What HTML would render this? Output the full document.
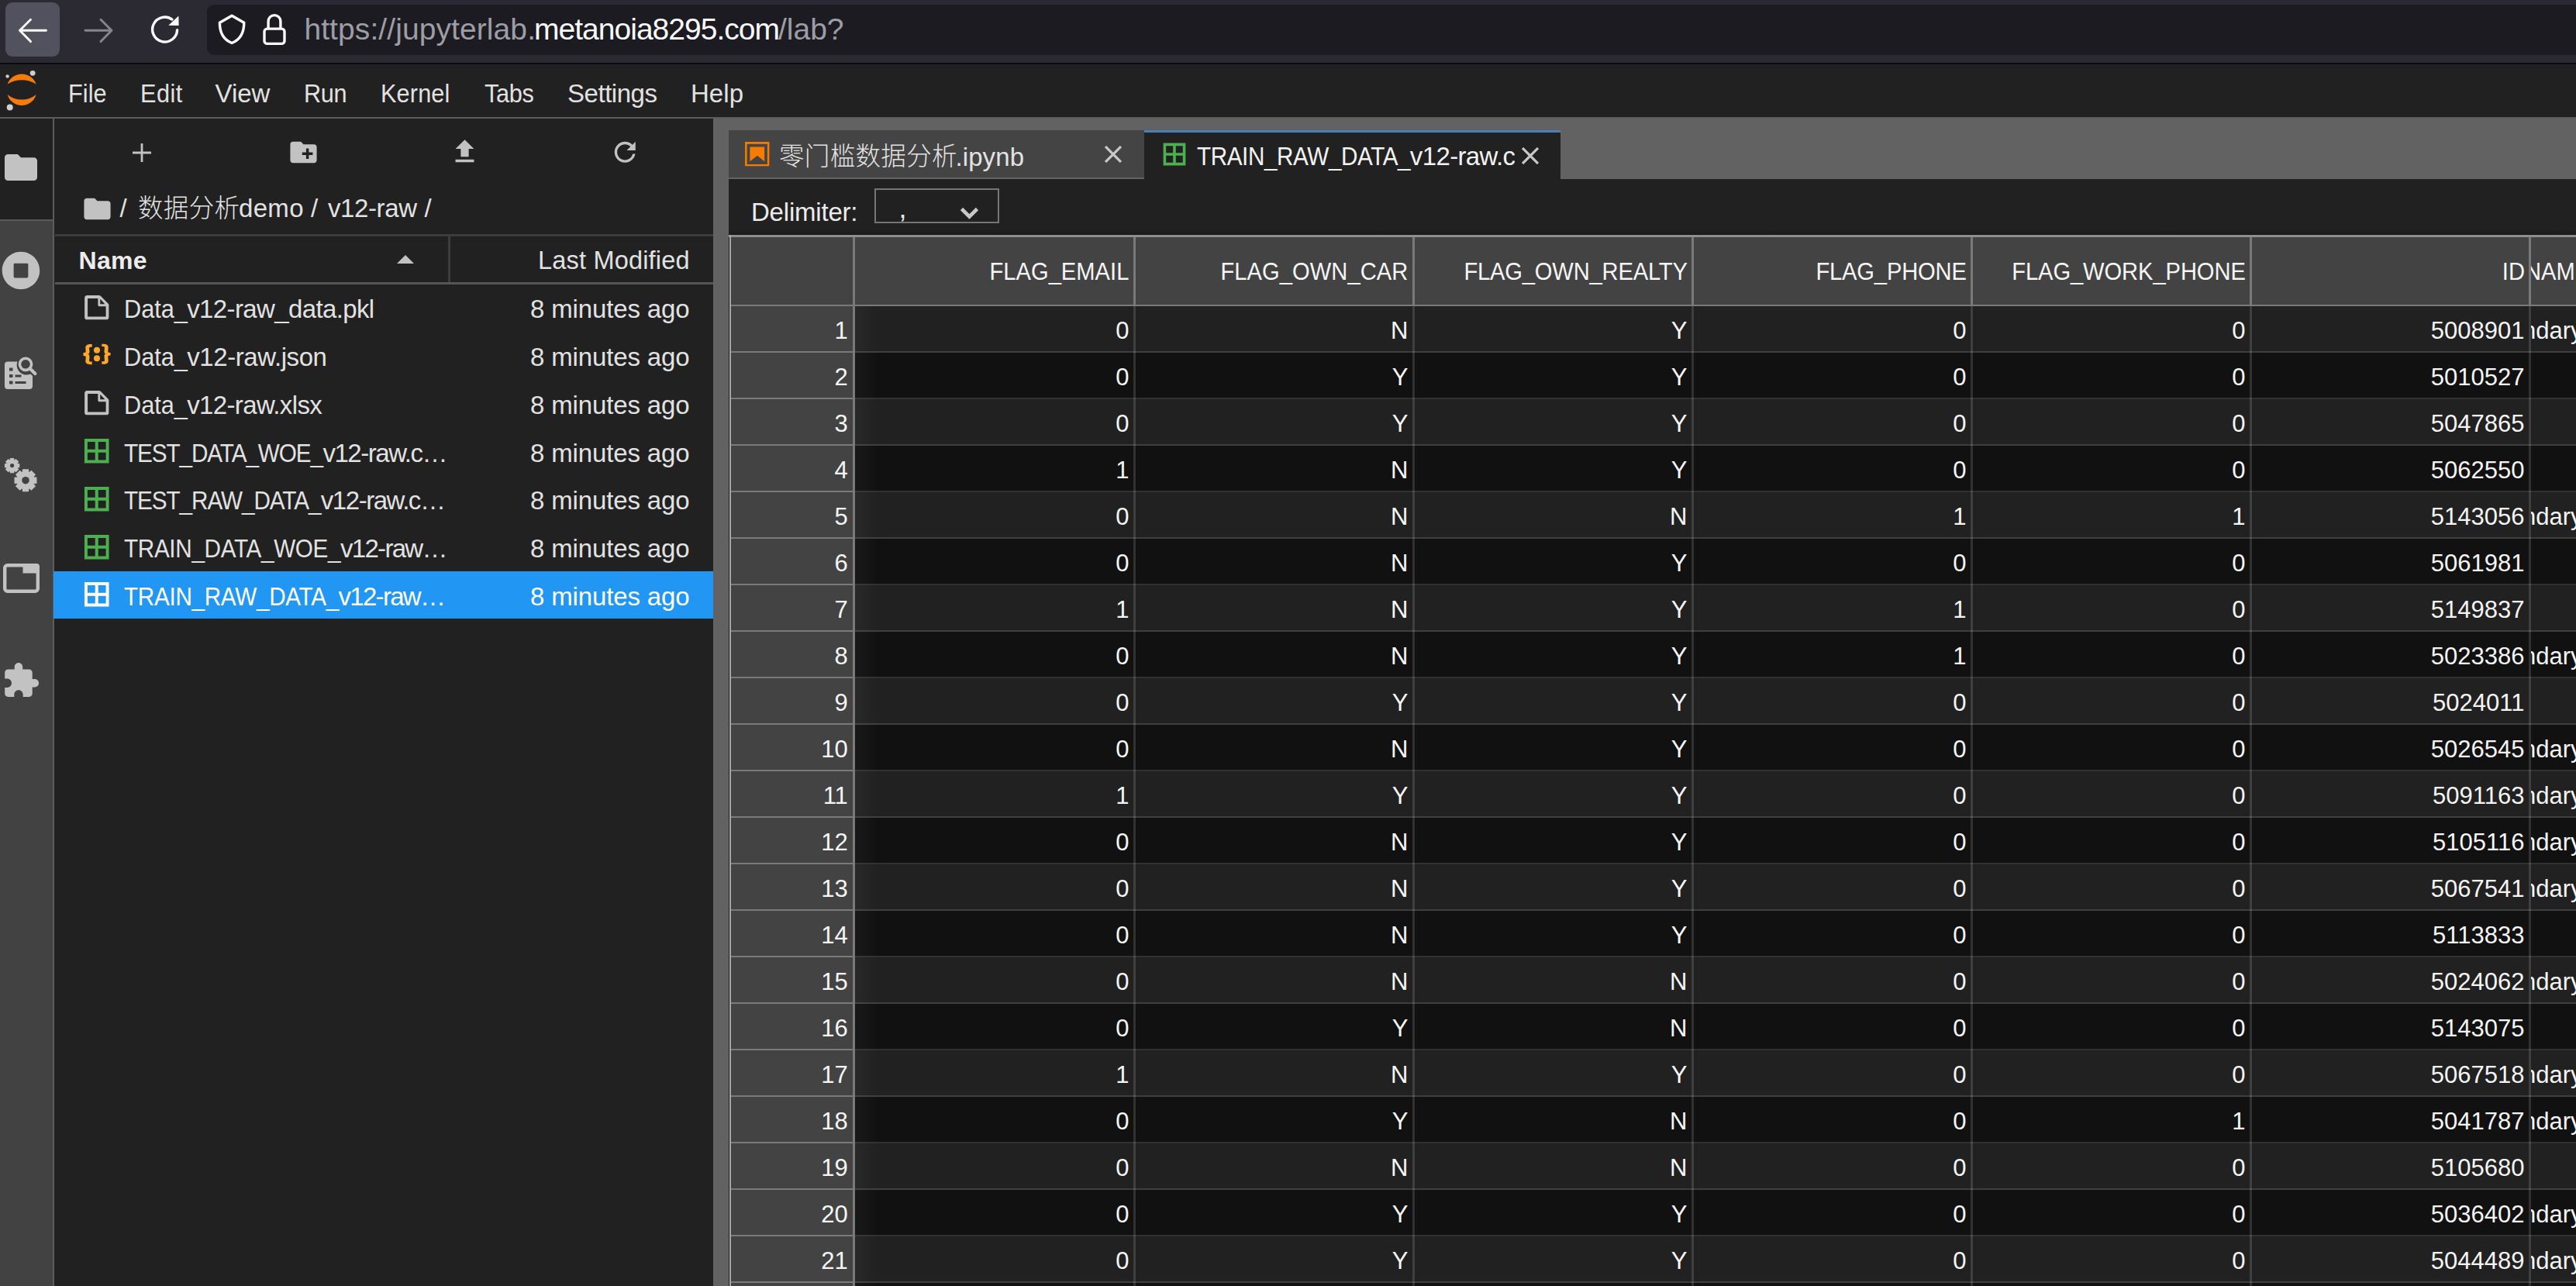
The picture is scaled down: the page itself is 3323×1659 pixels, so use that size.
<!DOCTYPE html>
<html lang="zh-CN">
<head>
<meta charset="utf-8">
<title>JupyterLab</title>
<style>
html,body{margin:0;padding:0;background:#212121;}
body{width:3323px;height:1659px;overflow:hidden;position:relative;font-family:"Liberation Sans", "Noto Sans CJK SC", sans-serif;}
header,nav,aside,section,main,ul,li{display:block;margin:0;padding:0;list-style:none;}
.b{position:absolute;display:block;}
.t{position:absolute;white-space:pre;display:block;}
</style>
</head>
<body>
<header class="chrome">
<div class="b" style="left:0px;top:0px;width:3323px;height:81px;background:#2b2a33;"></div>
<div class="b" style="left:0px;top:81px;width:3323px;height:2px;background:#0b0b0d;"></div>
<div class="b" style="left:7px;top:3px;width:70px;height:70px;background:#52525e;border-radius:9px;"></div>
<svg class="b" style="left:0px;top:0px;" width="260" height="81" viewBox="0 0 260 81"><g fill="none" stroke-linecap="round" stroke-linejoin="round" stroke-width="2.900"><path stroke="#fbfbfe" d="M59.500 39.300H25.500M39.500 25.300L25.500 39.300L39.500 53.600"/><path stroke="#85858e" d="M110 39.300H144M130 25.300L144 39.300L130 53.600"/></g><path fill="none" stroke="#fbfbfe" stroke-width="3.400" stroke-linecap="round" d="M228.600 38.600A16 16 0 1 1 222 25.100"/><path fill="#fbfbfe" d="M217.300 32.700L230.600 32.900L230.400 20.400Z"/></svg>
<div class="b" style="left:267px;top:6px;width:3076px;height:64.5px;background:#1c1b22;border-radius:9px;"></div>
<svg class="b" style="left:276px;top:14px;" width="46" height="48" viewBox="0 0 46 48"><path fill="none" stroke="#fbfbfe" stroke-width="3.400" stroke-linejoin="round" d="M23.100 6.300L7.400 15.300C7.400 28 12.300 37.300 23.100 41.500C33.900 37.300 38.800 28 38.800 15.300Z"/></svg>
<svg class="b" style="left:334px;top:14px;" width="40" height="48" viewBox="0 0 40 48"><g fill="none" stroke="#fbfbfe" stroke-width="3.400" stroke-linejoin="round"><rect x="7" y="23.100" width="26" height="19.300" rx="3.600"/><path d="M12.100 23.100V13.500A7.900 7.900 0 0 1 27.900 13.500V23.100"/></g></svg>
<span class="t" style="top:11.99px;font-size:39px;line-height:51px;color:#9d9da6;letter-spacing:0.089px;left:392.40px;">https://jupyterlab.</span>
<span class="t" style="top:11.99px;font-size:39px;line-height:51px;color:#fbfbfe;letter-spacing:-0.981px;left:689.00px;">metanoia8295.com</span>
<span class="t" style="top:11.99px;font-size:39px;line-height:51px;color:#9d9da6;letter-spacing:-0.020px;left:1004.00px;">/lab?</span>
</header>
<nav class="menubar">
<div class="b" style="left:0px;top:83px;width:3323px;height:70px;background:#212121;"></div>
<div class="b" style="left:0px;top:150.5px;width:3323px;height:2.5px;background:#5c5c5c;"></div>
<svg class="b" style="left:4px;top:89px;" width="48" height="56" viewBox="0 0 48 56"><g fill="#f57c0a"><path d="M5.600 19.500A19.650 19.650 0 0 1 42.600 19.500A35.500 35.500 0 0 0 5.600 19.500Z"/><path d="M5.600 32.900A19.200 19.200 0 0 0 42.600 32.900A29.200 29.200 0 0 1 5.600 32.900Z"/></g><g fill="#cfcfcf"><circle cx="38.200" cy="5.300" r="3.400"/><circle cx="5.600" cy="9.400" r="2.200"/><circle cx="8.700" cy="49.500" r="4"/></g></svg>
<span class="t" style="top:99.07px;font-size:33px;line-height:43px;color:#e2e2e2;letter-spacing:0.070px;left:87.50px;transform:scaleX(0.93);transform-origin:0 50%;">File</span>
<span class="t" style="top:99.07px;font-size:33px;line-height:43px;color:#e2e2e2;letter-spacing:0.526px;left:180.80px;transform:scaleX(0.93);transform-origin:0 50%;">Edit</span>
<span class="t" style="top:99.07px;font-size:33px;line-height:43px;color:#e2e2e2;letter-spacing:-0.046px;left:277.60px;">View</span>
<span class="t" style="top:99.07px;font-size:33px;line-height:43px;color:#e2e2e2;letter-spacing:-0.456px;left:391.90px;transform:scaleX(0.93);transform-origin:0 50%;">Run</span>
<span class="t" style="top:99.07px;font-size:33px;line-height:43px;color:#e2e2e2;letter-spacing:0.139px;left:491.00px;transform:scaleX(0.93);transform-origin:0 50%;">Kernel</span>
<span class="t" style="top:99.07px;font-size:33px;line-height:43px;color:#e2e2e2;letter-spacing:-0.351px;left:625.00px;transform:scaleX(0.93);transform-origin:0 50%;">Tabs</span>
<span class="t" style="top:99.07px;font-size:33px;line-height:43px;color:#e2e2e2;letter-spacing:-0.464px;left:732.00px;">Settings</span>
<span class="t" style="top:99.07px;font-size:33px;line-height:43px;color:#e2e2e2;letter-spacing:0.042px;left:891.00px;">Help</span>
</nav>
<aside class="sidebar">
<div class="b" style="left:0px;top:153px;width:68px;height:1506px;background:#424242;"></div>
<div class="b" style="left:0px;top:153px;width:68px;height:130px;background:#212121;"></div>
<div class="b" style="left:0px;top:283px;width:68px;height:2px;background:#5a5a5a;"></div>
<div class="b" style="left:68.3px;top:153px;width:2.2px;height:1506px;background:#5c5c5c;"></div>
<svg class="b" style="left:3px;top:192px;transform:scale(1.050,1.060);" width="48" height="48" viewBox="0 0 24 24"><path fill="#c2c2c2" d="M10 4H4c-1.100 0-1.990.9-1.990 2L2 18c0 1.100.9 2 2 2h16c1.100 0 2-.9 2-2V8c0-1.100-.9-2-2-2h-8l-2-2z"/></svg>
<svg class="b" style="left:1.9px;top:324.4px;" width="50" height="50" viewBox="0 0 512 512"><path fill="#c2c2c2" d="M256 8C119 8 8 119 8 256s111 248 248 248 248-111 248-248S393 8 256 8zm96 328c0 8.800-7.200 16-16 16H176c-8.800 0-16-7.200-16-16V176c0-8.800 7.200-16 16-16h160c8.800 0 16 7.200 16 16v160z"/></svg>
<svg class="b" style="left:4px;top:458px;" width="46" height="46" viewBox="0 0 46 46"><g fill="#c2c2c2"><path d="M6 8.500h12.500a13 13 0 0 0 -.8 4.500a12.600 12.600 0 0 0 12.600 12.600a12.400 12.400 0 0 0 5.200-1.100l2.500 2.500V40a4 4 0 0 1-4 4H6a4 4 0 0 1-4-4V12.500a4 4 0 0 1 4-4z"/></g><g fill="#424242"><rect x="8" y="16.500" width="4.500" height="4"/><rect x="8" y="25" width="4.500" height="4"/><rect x="8" y="33.500" width="4.500" height="4"/><rect x="15.500" y="25.500" width="8" height="3"/><rect x="15.500" y="34" width="14" height="3"/></g><circle cx="29" cy="11.800" r="7.600" fill="none" stroke="#c2c2c2" stroke-width="3.600"/><path d="M34.500 17.300L41.300 24" stroke="#c2c2c2" stroke-width="4.200" stroke-linecap="round"/></svg>
<svg class="b" style="left:0px;top:585px;" width="60" height="56" viewBox="0 0 60 56"><path fill="#c2c2c2" d="M22.30 12.70L25.25 12.96L25.25 18.24L22.30 18.50L22.39 18.29L24.29 20.55L20.55 24.29L18.29 22.39L18.50 22.30L18.24 25.25L12.96 25.25L12.70 22.30L12.91 22.39L10.65 24.29L6.91 20.55L8.81 18.29L8.90 18.50L5.95 18.24L5.95 12.96L8.90 12.70L8.81 12.91L6.91 10.65L10.65 6.91L12.91 8.81L12.70 8.90L12.96 5.95L18.24 5.95L18.50 8.90L18.29 8.81L20.55 6.91L24.29 10.65L22.39 12.91Z"/><circle cx="15.6" cy="15.6" r="2.6" fill="#424242"/><path fill="#c2c2c2" d="M43.10 30.33L47.47 30.74L47.47 38.66L43.10 39.07L43.23 38.75L46.03 42.13L40.43 47.73L37.05 44.93L37.37 44.80L36.96 49.17L29.04 49.17L28.63 44.80L28.95 44.93L25.57 47.73L19.97 42.13L22.77 38.75L22.90 39.07L18.53 38.66L18.53 30.74L22.90 30.33L22.77 30.65L19.97 27.27L25.57 21.67L28.95 24.47L28.63 24.60L29.04 20.23L36.96 20.23L37.37 24.60L37.05 24.47L40.43 21.67L46.03 27.27L43.23 30.65Z"/><circle cx="33" cy="34.7" r="4.8" fill="#424242"/></svg>
<svg class="b" style="left:3.5px;top:726.5px;" width="47" height="38" viewBox="0 0 47 38"><rect x="2.200" y="2.200" width="42.600" height="33.600" rx="3.500" fill="none" stroke="#c2c2c2" stroke-width="4.400"/><path fill="#c2c2c2" d="M25.500 0H43a4 4 0 0 1 4 4V12.500H25.500Z"/></svg>
<svg class="b" style="left:1.65px;top:852.5px;" width="50.2" height="50.2" viewBox="0 0 24 24"><path fill="#c2c2c2" d="M20.500 11H19V7c0-1.100-.9-2-2-2h-4V3.500C13 2.120 11.880 1 10.500 1S8 2.120 8 3.500V5H4c-1.100 0-1.990.9-1.990 2v3.800H3.500c1.490 0 2.700 1.210 2.700 2.700s-1.210 2.700-2.700 2.700H2V20c0 1.100.9 2 2 2h3.800v-1.500c0-1.490 1.210-2.700 2.700-2.700 1.490 0 2.700 1.210 2.700 2.700V22H17c1.100 0 2-.9 2-2v-4h1.500c1.380 0 2.500-1.120 2.500-2.500S21.880 11 20.500 11z"/></svg>
</aside>
<section class="filebrowser">
<div class="b" style="left:70.5px;top:153px;width:849.5px;height:1506px;background:#212121;"></div>
<svg class="b" style="left:171px;top:184.5px;" width="24" height="24" viewBox="0 0 24 24"><path fill="#c2c2c2" d="M10.600 0h2.800v10.600H24v2.800H13.400V24h-2.800V13.400H0v-2.800h10.600z"/></svg>
<svg class="b" style="left:370.5px;top:175.5px;" width="41" height="41" viewBox="0 0 24 24"><path fill="#c2c2c2" d="M20 6h-8l-2-2H4c-1.110 0-1.990.89-1.990 2L2 18c0 1.110.89 2 2 2h16c1.110 0 2-.89 2-2V8c0-1.110-.89-2-2-2zm-1 8h-3v3h-2v-3h-3v-2h3V9h2v3h3v2z"/></svg>
<svg class="b" style="left:578.5px;top:174.5px;" width="41" height="41" viewBox="0 0 24 24"><path fill="#c2c2c2" d="M9 16h6v-6h4l-7-7-7 7h4zm-4 2h14v2H5z"/></svg>
<svg class="b" style="left:785.9px;top:175.9px;" width="40.5" height="40.5" viewBox="0 0 18 18"><path fill="#c2c2c2" d="M9 13.500c-2.490 0-4.500-2.010-4.500-4.500S6.510 4.500 9 4.500c1.240 0 2.360.52 3.170 1.330L10 8h5V3l-1.760 1.760C12.150 3.680 10.660 3 9 3 5.690 3 3.010 5.690 3.010 9S5.690 15 9 15c2.970 0 5.430-2.160 5.900-5h-1.520c-.46 2-2.240 3.500-4.380 3.500z"/></svg>
<svg class="b" style="left:104.5px;top:248.5px;" width="41" height="41" viewBox="0 0 24 24"><path fill="#c2c2c2" d="M10 4H4c-1.100 0-1.990.9-1.990 2L2 18c0 1.100.9 2 2 2h16c1.100 0 2-.9 2-2V8c0-1.100-.9-2-2-2h-8l-2-2z"/></svg>
<span class="t" style="top:247.07px;font-size:33px;line-height:43px;color:#e2e2e2;left:154.50px;">/</span>
<span class="t" style="top:247.74px;font-size:32.5px;line-height:42px;color:#e2e2e2;font-weight:300;letter-spacing:0.328px;left:178.00px;">数据分析</span>
<span class="t" style="top:247.07px;font-size:33px;line-height:43px;color:#e2e2e2;letter-spacing:0.312px;left:308.00px;">demo</span>
<span class="t" style="top:247.07px;font-size:33px;line-height:43px;color:#e2e2e2;left:401.00px;">/</span>
<span class="t" style="top:247.07px;font-size:33px;line-height:43px;color:#e2e2e2;letter-spacing:-0.396px;left:423.00px;">v12-raw</span>
<span class="t" style="top:247.07px;font-size:33px;line-height:43px;color:#e2e2e2;left:547.50px;">/</span>
<div class="b" style="left:70.5px;top:302px;width:849.5px;height:2.5px;background:#3c3c3c;"></div>
<div class="b" style="left:70.5px;top:364px;width:849.5px;height:2.5px;background:#555555;"></div>
<div class="b" style="left:578px;top:304.5px;width:2.5px;height:59.5px;background:#3c3c3c;"></div>
<span class="t" style="top:315.41px;font-size:32px;line-height:42px;color:#ececec;font-weight:700;letter-spacing:0.281px;left:101.50px;">Name</span>
<svg class="b" style="left:512px;top:328.5px;" width="22" height="11" viewBox="0 0 22 11"><path fill="#c2c2c2" d="M0 11L11 0L22 11Z"/></svg>
<span class="t" style="top:315.24px;font-size:32.5px;line-height:42px;color:#e2e2e2;letter-spacing:0.182px;right:2433.32px;">Last Modified</span>
<ul class="listing">
<li>
<svg class="b" style="left:104.9px;top:376.9px;" width="39.5" height="39.5" viewBox="0 0 22 22"><g fill="#c2c2c2"><path d="M19.300 8.200l-5.500-5.500c-.3-.3-.7-.5-1.200-.5H3.900c-.8.100-1.600.9-1.600 1.800v14.100c0 .9.700 1.600 1.600 1.600h14.200c.9 0 1.600-.7 1.600-1.600V9.400c.1-.5-.1-.9-.4-1.200zm-5.800-3.300l3.400 3.600h-3.400V4.900zm3.900 12.700H4.700c-.1 0-.2 0-.2-.2V4.700c0-.2.100-.3.200-.3h7.200v4.400s0 .8.300 1.100c.3.300 1.100.3 1.100.3h4.300v7.200s-.1.200-.2.200z"/></g></svg>
<span class="t" style="top:377.27px;font-size:33px;line-height:43px;color:#e2e2e2;letter-spacing:-0.010px;left:160.20px;transform:scaleX(0.93);transform-origin:0 50%;">Data_</span>
<span class="t" style="top:377.27px;font-size:33px;line-height:43px;color:#e2e2e2;letter-spacing:-0.621px;left:241.20px;">v12-raw_data.pkl</span>
<span class="t" style="top:377.27px;font-size:33px;line-height:43px;color:#e2e2e2;letter-spacing:-0.151px;right:2433.65px;">8 minutes ago</span>
</li>
<li>
<svg class="b" style="left:103.75px;top:435.8px;" width="42" height="42" viewBox="0 0 22 22"><g fill="#ffa726"><path d="M20.200 11.800c-1.600 0-1.700.5-1.700 1 0 .4.100.9.100 1.300.1.500.1.900.1 1.300 0 1.700-1.400 2.300-3.500 2.300h-.9v-1.900h.5c1.100 0 1.400 0 1.400-.8 0-.3 0-.6-.1-1 0-.4-.1-.8-.1-1.200 0-1.300 0-1.800 1.300-2-1.300-.2-1.300-.7-1.300-2 0-.4.100-.8.100-1.200.1-.4.100-.7.100-1 0-.8-.4-.7-1.400-.8h-.5V4.100h.9c2.200 0 3.500.7 3.500 2.300 0 .4-.1.900-.1 1.300-.1.500-.1.900-.1 1.300 0 .5.200 1 1.700 1v1.800zM1.800 10.100c1.600 0 1.700-.5 1.700-1 0-.4-.1-.9-.1-1.300-.1-.5-.1-.9-.1-1.300 0-1.600 1.400-2.300 3.500-2.300h.9v1.900h-.5c-1 0-1.400 0-1.400.8 0 .3 0 .6.100 1 0 .2.100.6.100 1 0 1.300 0 1.800-1.300 2C6 11.200 6 11.700 6 13c0 .4-.1.800-.1 1.200-.1.300-.1.700-.1 1 0 .8.300.8 1.400.8h.5v1.900h-.9c-2.100 0-3.500-.6-3.500-2.300 0-.4.100-.9.100-1.300.1-.5.100-.9.100-1.300 0-.5-.2-1-1.700-1v-1.900z"/><circle cx="11" cy="13.800" r="2.100"/><circle cx="11" cy="8.200" r="2.100"/></g></svg>
<span class="t" style="top:439.02px;font-size:33px;line-height:43px;color:#e2e2e2;letter-spacing:-0.010px;left:160.20px;transform:scaleX(0.93);transform-origin:0 50%;">Data_</span>
<span class="t" style="top:439.02px;font-size:33px;line-height:43px;color:#e2e2e2;letter-spacing:-0.406px;left:241.20px;">v12-raw.json</span>
<span class="t" style="top:439.02px;font-size:33px;line-height:43px;color:#e2e2e2;letter-spacing:-0.151px;right:2433.65px;">8 minutes ago</span>
</li>
<li>
<svg class="b" style="left:104.9px;top:500.4px;" width="39.5" height="39.5" viewBox="0 0 22 22"><g fill="#c2c2c2"><path d="M19.300 8.200l-5.500-5.500c-.3-.3-.7-.5-1.200-.5H3.900c-.8.100-1.600.9-1.600 1.800v14.100c0 .9.700 1.600 1.600 1.600h14.200c.9 0 1.600-.7 1.600-1.600V9.400c.1-.5-.1-.9-.4-1.200zm-5.800-3.300l3.400 3.600h-3.400V4.900zm3.900 12.700H4.700c-.1 0-.2 0-.2-.2V4.700c0-.2.100-.3.200-.3h7.200v4.400s0 .8.300 1.100c.3.300 1.100.3 1.100.3h4.300v7.200s-.1.200-.2.200z"/></g></svg>
<span class="t" style="top:500.77px;font-size:33px;line-height:43px;color:#e2e2e2;letter-spacing:-0.010px;left:160.20px;transform:scaleX(0.93);transform-origin:0 50%;">Data_</span>
<span class="t" style="top:500.77px;font-size:33px;line-height:43px;color:#e2e2e2;letter-spacing:-0.633px;left:241.20px;">v12-raw.xlsx</span>
<span class="t" style="top:500.77px;font-size:33px;line-height:43px;color:#e2e2e2;letter-spacing:-0.151px;right:2433.65px;">8 minutes ago</span>
</li>
<li>
<svg class="b" style="left:104.60000000000001px;top:562.05px;" width="39.5" height="39.5" viewBox="0 0 22 22"><g fill="#4caf50"><path d="M2.200 2.200v17.600h17.600V2.200H2.200zm15.400 7.700h-5.500V4.400h5.500v5.500zM9.900 4.400v5.500H4.400V4.400h5.500zm-5.500 7.700h5.500v5.500H4.400v-5.500zm7.700 5.500v-5.500h5.500v5.500h-5.500z"/></g></svg>
<span class="t" style="top:562.52px;font-size:33px;line-height:43px;color:#e2e2e2;letter-spacing:-1.214px;left:160.20px;transform:scaleX(0.9);transform-origin:0 50%;">TEST_DATA_WOE_</span>
<span class="t" style="top:562.52px;font-size:33px;line-height:43px;color:#e2e2e2;letter-spacing:-1.458px;left:416.40px;">v12-raw.c…</span>
<span class="t" style="top:562.52px;font-size:33px;line-height:43px;color:#e2e2e2;letter-spacing:-0.151px;right:2433.65px;">8 minutes ago</span>
</li>
<li>
<svg class="b" style="left:104.60000000000001px;top:623.8px;" width="39.5" height="39.5" viewBox="0 0 22 22"><g fill="#4caf50"><path d="M2.200 2.200v17.600h17.600V2.200H2.200zm15.400 7.700h-5.500V4.400h5.500v5.500zM9.900 4.400v5.500H4.400V4.400h5.500zm-5.500 7.700h5.500v5.500H4.400v-5.500zm7.700 5.500v-5.500h5.500v5.500h-5.500z"/></g></svg>
<span class="t" style="top:624.27px;font-size:33px;line-height:43px;color:#e2e2e2;letter-spacing:-1.201px;left:160.20px;transform:scaleX(0.9);transform-origin:0 50%;">TEST_RAW_DATA_</span>
<span class="t" style="top:624.27px;font-size:33px;line-height:43px;color:#e2e2e2;letter-spacing:-1.458px;left:413.80px;">v12-raw.c…</span>
<span class="t" style="top:624.27px;font-size:33px;line-height:43px;color:#e2e2e2;letter-spacing:-0.151px;right:2433.65px;">8 minutes ago</span>
</li>
<li>
<svg class="b" style="left:104.60000000000001px;top:685.55px;" width="39.5" height="39.5" viewBox="0 0 22 22"><g fill="#4caf50"><path d="M2.200 2.200v17.600h17.600V2.200H2.200zm15.400 7.700h-5.500V4.400h5.500v5.500zM9.900 4.400v5.500H4.400V4.400h5.500zm-5.500 7.700h5.500v5.500H4.400v-5.500zm7.700 5.500v-5.500h5.500v5.500h-5.500z"/></g></svg>
<span class="t" style="top:686.02px;font-size:33px;line-height:43px;color:#e2e2e2;letter-spacing:-0.381px;left:160.20px;transform:scaleX(0.9);transform-origin:0 50%;">TRAIN_DATA_WOE_</span>
<span class="t" style="top:686.02px;font-size:33px;line-height:43px;color:#e2e2e2;letter-spacing:-1.696px;left:439.00px;">v12-raw…</span>
<span class="t" style="top:686.02px;font-size:33px;line-height:43px;color:#e2e2e2;letter-spacing:-0.151px;right:2433.65px;">8 minutes ago</span>
</li>
<li>
<div class="b" style="left:68.5px;top:737px;width:851.5px;height:61px;background:#2196f3;"></div>
<svg class="b" style="left:104.60000000000001px;top:747.3px;" width="39.5" height="39.5" viewBox="0 0 22 22"><g fill="#ffffff"><path d="M2.200 2.200v17.600h17.600V2.200H2.200zm15.400 7.700h-5.500V4.400h5.500v5.500zM9.900 4.400v5.500H4.400V4.400h5.500zm-5.500 7.700h5.500v5.500H4.400v-5.500zm7.700 5.500v-5.500h5.500v5.500h-5.500z"/></g></svg>
<span class="t" style="top:747.77px;font-size:33px;line-height:43px;color:#ffffff;letter-spacing:-0.353px;left:160.20px;transform:scaleX(0.9);transform-origin:0 50%;">TRAIN_RAW_DATA_</span>
<span class="t" style="top:747.77px;font-size:33px;line-height:43px;color:#ffffff;letter-spacing:-1.725px;left:436.60px;">v12-raw…</span>
<span class="t" style="top:747.77px;font-size:33px;line-height:43px;color:#ffffff;letter-spacing:-0.151px;right:2433.65px;">8 minutes ago</span>
</li>
</ul>
</section>
<main class="dock">
<div class="b" style="left:920px;top:153px;width:2403px;height:1506px;background:#626262;"></div>
<div class="b" style="left:940px;top:168px;width:535.5px;height:61px;background:#444444;"></div>
<svg class="b" style="left:957.5px;top:179.5px;" width="37.5" height="37.5" viewBox="0 0 22 22"><g fill="#f57c00"><path d="M18.700 3.300v15.400H3.300V3.300h15.400m1.500-1.500H1.800v18.300h18.300l.1-18.300z"/><path d="M16.500 16.500l-5.400-4.300-5.600 4.300v-11h11z"/></g></svg>
<span class="t" style="top:181.24px;font-size:32.5px;line-height:42px;color:#e2e2e2;font-weight:300;letter-spacing:0.331px;left:1005.00px;">零门槛数据分析</span>
<span class="t" style="top:180.57px;font-size:33px;line-height:43px;color:#e2e2e2;letter-spacing:0.087px;left:1232.50px;">.ipynb</span>
<svg class="b" style="left:1425px;top:187.5px;" width="22" height="22" viewBox="0 0 22 22"><path d="M1 1L21 21M21 1L1 21" stroke="#c8c8c8" stroke-width="3.200" fill="none"/></svg>
<div class="b" style="left:1476px;top:168px;width:537px;height:64px;background:#212121;"></div>
<div class="b" style="left:1476px;top:168px;width:537px;height:3px;background:#4a80b4;"></div>
<svg class="b" style="left:1496.5px;top:181px;" width="36" height="36" viewBox="0 0 22 22"><g fill="#4caf50"><path d="M2.200 2.200v17.600h17.600V2.200H2.200zm15.400 7.700h-5.500V4.400h5.500v5.500zM9.900 4.400v5.500H4.400V4.400h5.500zm-5.500 7.700h5.500v5.500H4.400v-5.500zm7.700 5.500v-5.500h5.500v5.500h-5.500z"/></g></svg>
<div class="b" style="left:1540px;top:170px;width:413.500px;height:60px;overflow:hidden;"><span class="t" style="top:10.07px;font-size:33px;line-height:43px;color:#f2f2f2;letter-spacing:-0.480px;left:4.00px;transform:scaleX(0.9);transform-origin:0 50%;">TRAIN_RAW_DATA_</span><span class="t" style="top:10.07px;font-size:33px;line-height:43px;color:#f2f2f2;letter-spacing:-0.622px;left:278.80px;">v12-raw.csv</span></div>
<svg class="b" style="left:1962.5px;top:189.5px;" width="22" height="22" viewBox="0 0 22 22"><path d="M1 1L21 21M21 1L1 21" stroke="#c8c8c8" stroke-width="3.200" fill="none"/></svg>
<div class="b" style="left:940px;top:231px;width:2383px;height:1428px;background:#212121;"></div>
<div class="b" style="left:940px;top:297px;width:2383px;height:6px;background:linear-gradient(#212121,#191919);"></div>
<span class="t" style="top:251.57px;font-size:33px;line-height:43px;color:#ececec;letter-spacing:-0.207px;left:969.00px;">Delimiter:</span>
<div class="b" style="left:1128px;top:243px;width:161px;height:44.5px;background:#212121;border:2px solid #757575;box-sizing:border-box;"></div>
<span class="t" style="top:244.53px;font-size:36px;line-height:47px;color:#ececec;left:1159.50px;">,</span>
<svg class="b" style="left:1237.5px;top:267px;" width="25" height="17" viewBox="0 0 25 17"><path d="M2.500 2.500L12.500 12.500L22.500 2.500" fill="none" stroke="#c8c8c8" stroke-width="4.600"/></svg>
</main>
<section class="grid">
<div class="b" style="left:940px;top:303px;width:2383px;height:2.5px;background:#8e8e8e;"></div>
<div class="b" style="left:940.5px;top:303px;width:2px;height:1356px;background:#a6a6a6;"></div>
<div class="b" style="left:942.5px;top:305.5px;width:2380.5px;height:89.5px;background:#434343;"></div>
<div class="b" style="left:942.5px;top:395px;width:160px;height:1264px;background:#434343;"></div>
<div class="b" style="left:1102.5px;top:395px;width:2220.5px;height:60px;background:#212121;"></div>
<div class="b" style="left:1102.5px;top:455px;width:2220.5px;height:60px;background:#111111;"></div>
<div class="b" style="left:1102.5px;top:515px;width:2220.5px;height:60px;background:#212121;"></div>
<div class="b" style="left:1102.5px;top:575px;width:2220.5px;height:60px;background:#111111;"></div>
<div class="b" style="left:1102.5px;top:635px;width:2220.5px;height:60px;background:#212121;"></div>
<div class="b" style="left:1102.5px;top:695px;width:2220.5px;height:60px;background:#111111;"></div>
<div class="b" style="left:1102.5px;top:755px;width:2220.5px;height:60px;background:#212121;"></div>
<div class="b" style="left:1102.5px;top:815px;width:2220.5px;height:60px;background:#111111;"></div>
<div class="b" style="left:1102.5px;top:875px;width:2220.5px;height:60px;background:#212121;"></div>
<div class="b" style="left:1102.5px;top:935px;width:2220.5px;height:60px;background:#111111;"></div>
<div class="b" style="left:1102.5px;top:995px;width:2220.5px;height:60px;background:#212121;"></div>
<div class="b" style="left:1102.5px;top:1055px;width:2220.5px;height:60px;background:#111111;"></div>
<div class="b" style="left:1102.5px;top:1115px;width:2220.5px;height:60px;background:#212121;"></div>
<div class="b" style="left:1102.5px;top:1175px;width:2220.5px;height:60px;background:#111111;"></div>
<div class="b" style="left:1102.5px;top:1235px;width:2220.5px;height:60px;background:#212121;"></div>
<div class="b" style="left:1102.5px;top:1295px;width:2220.5px;height:60px;background:#111111;"></div>
<div class="b" style="left:1102.5px;top:1355px;width:2220.5px;height:60px;background:#212121;"></div>
<div class="b" style="left:1102.5px;top:1415px;width:2220.5px;height:60px;background:#111111;"></div>
<div class="b" style="left:1102.5px;top:1475px;width:2220.5px;height:60px;background:#212121;"></div>
<div class="b" style="left:1102.5px;top:1535px;width:2220.5px;height:60px;background:#111111;"></div>
<div class="b" style="left:1102.5px;top:1595px;width:2220.5px;height:60px;background:#212121;"></div>
<div class="b" style="left:1102.5px;top:1655px;width:2220.5px;height:4px;background:#111111;"></div>
<div class="b" style="left:1103px;top:395px;width:30px;height:1264px;background:linear-gradient(90deg,rgba(255,255,255,0.035),rgba(255,255,255,0));"></div>
<div class="b" style="left:942.5px;top:392.5px;width:2380.5px;height:2.5px;background:#7a7a7a;"></div>
<div class="b" style="left:942.5px;top:452.5px;width:160px;height:2.5px;background:#7a7a7a;"></div>
<div class="b" style="left:1102.5px;top:452.5px;width:2220.5px;height:2.5px;background:rgba(235,235,235,0.15);"></div>
<div class="b" style="left:942.5px;top:512.5px;width:160px;height:2.5px;background:#7a7a7a;"></div>
<div class="b" style="left:1102.5px;top:512.5px;width:2220.5px;height:2.5px;background:rgba(235,235,235,0.15);"></div>
<div class="b" style="left:942.5px;top:572.5px;width:160px;height:2.5px;background:#7a7a7a;"></div>
<div class="b" style="left:1102.5px;top:572.5px;width:2220.5px;height:2.5px;background:rgba(235,235,235,0.15);"></div>
<div class="b" style="left:942.5px;top:632.5px;width:160px;height:2.5px;background:#7a7a7a;"></div>
<div class="b" style="left:1102.5px;top:632.5px;width:2220.5px;height:2.5px;background:rgba(235,235,235,0.15);"></div>
<div class="b" style="left:942.5px;top:692.5px;width:160px;height:2.5px;background:#7a7a7a;"></div>
<div class="b" style="left:1102.5px;top:692.5px;width:2220.5px;height:2.5px;background:rgba(235,235,235,0.15);"></div>
<div class="b" style="left:942.5px;top:752.5px;width:160px;height:2.5px;background:#7a7a7a;"></div>
<div class="b" style="left:1102.5px;top:752.5px;width:2220.5px;height:2.5px;background:rgba(235,235,235,0.15);"></div>
<div class="b" style="left:942.5px;top:812.5px;width:160px;height:2.5px;background:#7a7a7a;"></div>
<div class="b" style="left:1102.5px;top:812.5px;width:2220.5px;height:2.5px;background:rgba(235,235,235,0.15);"></div>
<div class="b" style="left:942.5px;top:872.5px;width:160px;height:2.5px;background:#7a7a7a;"></div>
<div class="b" style="left:1102.5px;top:872.5px;width:2220.5px;height:2.5px;background:rgba(235,235,235,0.15);"></div>
<div class="b" style="left:942.5px;top:932.5px;width:160px;height:2.5px;background:#7a7a7a;"></div>
<div class="b" style="left:1102.5px;top:932.5px;width:2220.5px;height:2.5px;background:rgba(235,235,235,0.15);"></div>
<div class="b" style="left:942.5px;top:992.5px;width:160px;height:2.5px;background:#7a7a7a;"></div>
<div class="b" style="left:1102.5px;top:992.5px;width:2220.5px;height:2.5px;background:rgba(235,235,235,0.15);"></div>
<div class="b" style="left:942.5px;top:1052.5px;width:160px;height:2.5px;background:#7a7a7a;"></div>
<div class="b" style="left:1102.5px;top:1052.5px;width:2220.5px;height:2.5px;background:rgba(235,235,235,0.15);"></div>
<div class="b" style="left:942.5px;top:1112.5px;width:160px;height:2.5px;background:#7a7a7a;"></div>
<div class="b" style="left:1102.5px;top:1112.5px;width:2220.5px;height:2.5px;background:rgba(235,235,235,0.15);"></div>
<div class="b" style="left:942.5px;top:1172.5px;width:160px;height:2.5px;background:#7a7a7a;"></div>
<div class="b" style="left:1102.5px;top:1172.5px;width:2220.5px;height:2.5px;background:rgba(235,235,235,0.15);"></div>
<div class="b" style="left:942.5px;top:1232.5px;width:160px;height:2.5px;background:#7a7a7a;"></div>
<div class="b" style="left:1102.5px;top:1232.5px;width:2220.5px;height:2.5px;background:rgba(235,235,235,0.15);"></div>
<div class="b" style="left:942.5px;top:1292.5px;width:160px;height:2.5px;background:#7a7a7a;"></div>
<div class="b" style="left:1102.5px;top:1292.5px;width:2220.5px;height:2.5px;background:rgba(235,235,235,0.15);"></div>
<div class="b" style="left:942.5px;top:1352.5px;width:160px;height:2.5px;background:#7a7a7a;"></div>
<div class="b" style="left:1102.5px;top:1352.5px;width:2220.5px;height:2.5px;background:rgba(235,235,235,0.15);"></div>
<div class="b" style="left:942.5px;top:1412.5px;width:160px;height:2.5px;background:#7a7a7a;"></div>
<div class="b" style="left:1102.5px;top:1412.5px;width:2220.5px;height:2.5px;background:rgba(235,235,235,0.15);"></div>
<div class="b" style="left:942.5px;top:1472.5px;width:160px;height:2.5px;background:#7a7a7a;"></div>
<div class="b" style="left:1102.5px;top:1472.5px;width:2220.5px;height:2.5px;background:rgba(235,235,235,0.15);"></div>
<div class="b" style="left:942.5px;top:1532.5px;width:160px;height:2.5px;background:#7a7a7a;"></div>
<div class="b" style="left:1102.5px;top:1532.5px;width:2220.5px;height:2.5px;background:rgba(235,235,235,0.15);"></div>
<div class="b" style="left:942.5px;top:1592.5px;width:160px;height:2.5px;background:#7a7a7a;"></div>
<div class="b" style="left:1102.5px;top:1592.5px;width:2220.5px;height:2.5px;background:rgba(235,235,235,0.15);"></div>
<div class="b" style="left:942.5px;top:1652.5px;width:160px;height:2.5px;background:#7a7a7a;"></div>
<div class="b" style="left:1102.5px;top:1652.5px;width:2220.5px;height:2.5px;background:rgba(235,235,235,0.15);"></div>
<div class="b" style="left:1100px;top:305.5px;width:2.6px;height:89.5px;background:#7a7a7a;"></div>
<div class="b" style="left:1100px;top:395px;width:2.6px;height:1264px;background:#7a7a7a;"></div>
<div class="b" style="left:1462px;top:305.5px;width:2.5px;height:89.5px;background:#7a7a7a;"></div>
<div class="b" style="left:1462px;top:395px;width:2.5px;height:1264px;background:rgba(235,235,235,0.15);"></div>
<div class="b" style="left:1822px;top:305.5px;width:2.5px;height:89.5px;background:#7a7a7a;"></div>
<div class="b" style="left:1822px;top:395px;width:2.5px;height:1264px;background:rgba(235,235,235,0.15);"></div>
<div class="b" style="left:2182px;top:305.5px;width:2.5px;height:89.5px;background:#7a7a7a;"></div>
<div class="b" style="left:2182px;top:395px;width:2.5px;height:1264px;background:rgba(235,235,235,0.15);"></div>
<div class="b" style="left:2542px;top:305.5px;width:2.5px;height:89.5px;background:#7a7a7a;"></div>
<div class="b" style="left:2542px;top:395px;width:2.5px;height:1264px;background:rgba(235,235,235,0.15);"></div>
<div class="b" style="left:2902px;top:305.5px;width:2.5px;height:89.5px;background:#7a7a7a;"></div>
<div class="b" style="left:2902px;top:395px;width:2.5px;height:1264px;background:rgba(235,235,235,0.15);"></div>
<div class="b" style="left:3262px;top:305.5px;width:2.5px;height:89.5px;background:#7a7a7a;"></div>
<div class="b" style="left:3262px;top:395px;width:2.5px;height:1264px;background:rgba(235,235,235,0.15);"></div>
<span class="t" style="top:331.26px;font-size:31px;line-height:40px;color:#f5f5f5;letter-spacing:0.012px;right:1866.49px;transform:scaleX(0.94);transform-origin:100% 50%;">FLAG_EMAIL</span>
<span class="t" style="top:331.26px;font-size:31px;line-height:40px;color:#f5f5f5;letter-spacing:0.059px;right:1506.44px;transform:scaleX(0.94);transform-origin:100% 50%;">FLAG_OWN_CAR</span>
<span class="t" style="top:331.26px;font-size:31px;line-height:40px;color:#f5f5f5;letter-spacing:-0.187px;right:1146.68px;transform:scaleX(0.94);transform-origin:100% 50%;">FLAG_OWN_REALTY</span>
<span class="t" style="top:331.26px;font-size:31px;line-height:40px;color:#f5f5f5;letter-spacing:-0.173px;right:786.66px;transform:scaleX(0.94);transform-origin:100% 50%;">FLAG_PHONE</span>
<span class="t" style="top:331.26px;font-size:31px;line-height:40px;color:#f5f5f5;letter-spacing:-0.093px;right:426.59px;transform:scaleX(0.94);transform-origin:100% 50%;">FLAG_WORK_PHONE</span>
<span class="t" style="top:331.26px;font-size:31px;line-height:40px;color:#f5f5f5;right:66.50px;transform:scaleX(0.94);transform-origin:100% 50%;">ID</span>
<div class="b" style="left:3264.500px;top:305.5px;width:58.5px;height:1353.5px;overflow:hidden;">
<span class="t" style="top:25.76px;font-size:31px;line-height:40px;color:#f5f5f5;letter-spacing:0.042px;left:-8.00px;transform:scaleX(0.94);transform-origin:0 50%;">NAME_EDUCATION_TYPE</span>
<span class="t" style="top:101.06px;font-size:31px;line-height:40px;color:#f5f5f5;left:-81.10px;">Secondary / secondary special</span>
<span class="t" style="top:341.06px;font-size:31px;line-height:40px;color:#f5f5f5;left:-81.10px;">Secondary / secondary special</span>
<span class="t" style="top:521.06px;font-size:31px;line-height:40px;color:#f5f5f5;left:-81.10px;">Secondary / secondary special</span>
<span class="t" style="top:641.06px;font-size:31px;line-height:40px;color:#f5f5f5;left:-81.10px;">Secondary / secondary special</span>
<span class="t" style="top:701.06px;font-size:31px;line-height:40px;color:#f5f5f5;left:-81.10px;">Secondary / secondary special</span>
<span class="t" style="top:761.06px;font-size:31px;line-height:40px;color:#f5f5f5;left:-81.10px;">Secondary / secondary special</span>
<span class="t" style="top:821.06px;font-size:31px;line-height:40px;color:#f5f5f5;left:-81.10px;">Secondary / secondary special</span>
<span class="t" style="top:941.06px;font-size:31px;line-height:40px;color:#f5f5f5;left:-81.10px;">Secondary / secondary special</span>
<span class="t" style="top:1061.06px;font-size:31px;line-height:40px;color:#f5f5f5;left:-81.10px;">Secondary / secondary special</span>
<span class="t" style="top:1121.06px;font-size:31px;line-height:40px;color:#f5f5f5;left:-81.10px;">Secondary / secondary special</span>
<span class="t" style="top:1241.06px;font-size:31px;line-height:40px;color:#f5f5f5;left:-81.10px;">Secondary / secondary special</span>
<span class="t" style="top:1301.06px;font-size:31px;line-height:40px;color:#f5f5f5;left:-81.10px;">Secondary / secondary special</span>
</div>
<span class="t" style="top:406.56px;font-size:31px;line-height:40px;color:#f5f5f5;right:2229.20px;">1</span>
<span class="t" style="top:406.56px;font-size:31px;line-height:40px;color:#f5f5f5;right:1866.50px;">0</span>
<span class="t" style="top:406.56px;font-size:31px;line-height:40px;color:#f5f5f5;right:1506.50px;">N</span>
<span class="t" style="top:406.56px;font-size:31px;line-height:40px;color:#f5f5f5;right:1146.50px;">Y</span>
<span class="t" style="top:406.56px;font-size:31px;line-height:40px;color:#f5f5f5;right:786.50px;">0</span>
<span class="t" style="top:406.56px;font-size:31px;line-height:40px;color:#f5f5f5;right:426.50px;">0</span>
<span class="t" style="top:406.56px;font-size:31px;line-height:40px;color:#f5f5f5;right:66.50px;">5008901</span>
<span class="t" style="top:466.56px;font-size:31px;line-height:40px;color:#f5f5f5;right:2229.20px;">2</span>
<span class="t" style="top:466.56px;font-size:31px;line-height:40px;color:#f5f5f5;right:1866.50px;">0</span>
<span class="t" style="top:466.56px;font-size:31px;line-height:40px;color:#f5f5f5;right:1506.50px;">Y</span>
<span class="t" style="top:466.56px;font-size:31px;line-height:40px;color:#f5f5f5;right:1146.50px;">Y</span>
<span class="t" style="top:466.56px;font-size:31px;line-height:40px;color:#f5f5f5;right:786.50px;">0</span>
<span class="t" style="top:466.56px;font-size:31px;line-height:40px;color:#f5f5f5;right:426.50px;">0</span>
<span class="t" style="top:466.56px;font-size:31px;line-height:40px;color:#f5f5f5;right:66.50px;">5010527</span>
<span class="t" style="top:526.56px;font-size:31px;line-height:40px;color:#f5f5f5;right:2229.20px;">3</span>
<span class="t" style="top:526.56px;font-size:31px;line-height:40px;color:#f5f5f5;right:1866.50px;">0</span>
<span class="t" style="top:526.56px;font-size:31px;line-height:40px;color:#f5f5f5;right:1506.50px;">Y</span>
<span class="t" style="top:526.56px;font-size:31px;line-height:40px;color:#f5f5f5;right:1146.50px;">Y</span>
<span class="t" style="top:526.56px;font-size:31px;line-height:40px;color:#f5f5f5;right:786.50px;">0</span>
<span class="t" style="top:526.56px;font-size:31px;line-height:40px;color:#f5f5f5;right:426.50px;">0</span>
<span class="t" style="top:526.56px;font-size:31px;line-height:40px;color:#f5f5f5;right:66.50px;">5047865</span>
<span class="t" style="top:586.56px;font-size:31px;line-height:40px;color:#f5f5f5;right:2229.20px;">4</span>
<span class="t" style="top:586.56px;font-size:31px;line-height:40px;color:#f5f5f5;right:1866.50px;">1</span>
<span class="t" style="top:586.56px;font-size:31px;line-height:40px;color:#f5f5f5;right:1506.50px;">N</span>
<span class="t" style="top:586.56px;font-size:31px;line-height:40px;color:#f5f5f5;right:1146.50px;">Y</span>
<span class="t" style="top:586.56px;font-size:31px;line-height:40px;color:#f5f5f5;right:786.50px;">0</span>
<span class="t" style="top:586.56px;font-size:31px;line-height:40px;color:#f5f5f5;right:426.50px;">0</span>
<span class="t" style="top:586.56px;font-size:31px;line-height:40px;color:#f5f5f5;right:66.50px;">5062550</span>
<span class="t" style="top:646.56px;font-size:31px;line-height:40px;color:#f5f5f5;right:2229.20px;">5</span>
<span class="t" style="top:646.56px;font-size:31px;line-height:40px;color:#f5f5f5;right:1866.50px;">0</span>
<span class="t" style="top:646.56px;font-size:31px;line-height:40px;color:#f5f5f5;right:1506.50px;">N</span>
<span class="t" style="top:646.56px;font-size:31px;line-height:40px;color:#f5f5f5;right:1146.50px;">N</span>
<span class="t" style="top:646.56px;font-size:31px;line-height:40px;color:#f5f5f5;right:786.50px;">1</span>
<span class="t" style="top:646.56px;font-size:31px;line-height:40px;color:#f5f5f5;right:426.50px;">1</span>
<span class="t" style="top:646.56px;font-size:31px;line-height:40px;color:#f5f5f5;right:66.50px;">5143056</span>
<span class="t" style="top:706.56px;font-size:31px;line-height:40px;color:#f5f5f5;right:2229.20px;">6</span>
<span class="t" style="top:706.56px;font-size:31px;line-height:40px;color:#f5f5f5;right:1866.50px;">0</span>
<span class="t" style="top:706.56px;font-size:31px;line-height:40px;color:#f5f5f5;right:1506.50px;">N</span>
<span class="t" style="top:706.56px;font-size:31px;line-height:40px;color:#f5f5f5;right:1146.50px;">Y</span>
<span class="t" style="top:706.56px;font-size:31px;line-height:40px;color:#f5f5f5;right:786.50px;">0</span>
<span class="t" style="top:706.56px;font-size:31px;line-height:40px;color:#f5f5f5;right:426.50px;">0</span>
<span class="t" style="top:706.56px;font-size:31px;line-height:40px;color:#f5f5f5;right:66.50px;">5061981</span>
<span class="t" style="top:766.56px;font-size:31px;line-height:40px;color:#f5f5f5;right:2229.20px;">7</span>
<span class="t" style="top:766.56px;font-size:31px;line-height:40px;color:#f5f5f5;right:1866.50px;">1</span>
<span class="t" style="top:766.56px;font-size:31px;line-height:40px;color:#f5f5f5;right:1506.50px;">N</span>
<span class="t" style="top:766.56px;font-size:31px;line-height:40px;color:#f5f5f5;right:1146.50px;">Y</span>
<span class="t" style="top:766.56px;font-size:31px;line-height:40px;color:#f5f5f5;right:786.50px;">1</span>
<span class="t" style="top:766.56px;font-size:31px;line-height:40px;color:#f5f5f5;right:426.50px;">0</span>
<span class="t" style="top:766.56px;font-size:31px;line-height:40px;color:#f5f5f5;right:66.50px;">5149837</span>
<span class="t" style="top:826.56px;font-size:31px;line-height:40px;color:#f5f5f5;right:2229.20px;">8</span>
<span class="t" style="top:826.56px;font-size:31px;line-height:40px;color:#f5f5f5;right:1866.50px;">0</span>
<span class="t" style="top:826.56px;font-size:31px;line-height:40px;color:#f5f5f5;right:1506.50px;">N</span>
<span class="t" style="top:826.56px;font-size:31px;line-height:40px;color:#f5f5f5;right:1146.50px;">Y</span>
<span class="t" style="top:826.56px;font-size:31px;line-height:40px;color:#f5f5f5;right:786.50px;">1</span>
<span class="t" style="top:826.56px;font-size:31px;line-height:40px;color:#f5f5f5;right:426.50px;">0</span>
<span class="t" style="top:826.56px;font-size:31px;line-height:40px;color:#f5f5f5;right:66.50px;">5023386</span>
<span class="t" style="top:886.56px;font-size:31px;line-height:40px;color:#f5f5f5;right:2229.20px;">9</span>
<span class="t" style="top:886.56px;font-size:31px;line-height:40px;color:#f5f5f5;right:1866.50px;">0</span>
<span class="t" style="top:886.56px;font-size:31px;line-height:40px;color:#f5f5f5;right:1506.50px;">Y</span>
<span class="t" style="top:886.56px;font-size:31px;line-height:40px;color:#f5f5f5;right:1146.50px;">Y</span>
<span class="t" style="top:886.56px;font-size:31px;line-height:40px;color:#f5f5f5;right:786.50px;">0</span>
<span class="t" style="top:886.56px;font-size:31px;line-height:40px;color:#f5f5f5;right:426.50px;">0</span>
<span class="t" style="top:886.56px;font-size:31px;line-height:40px;color:#f5f5f5;right:66.50px;">5024011</span>
<span class="t" style="top:946.56px;font-size:31px;line-height:40px;color:#f5f5f5;right:2229.20px;">10</span>
<span class="t" style="top:946.56px;font-size:31px;line-height:40px;color:#f5f5f5;right:1866.50px;">0</span>
<span class="t" style="top:946.56px;font-size:31px;line-height:40px;color:#f5f5f5;right:1506.50px;">N</span>
<span class="t" style="top:946.56px;font-size:31px;line-height:40px;color:#f5f5f5;right:1146.50px;">Y</span>
<span class="t" style="top:946.56px;font-size:31px;line-height:40px;color:#f5f5f5;right:786.50px;">0</span>
<span class="t" style="top:946.56px;font-size:31px;line-height:40px;color:#f5f5f5;right:426.50px;">0</span>
<span class="t" style="top:946.56px;font-size:31px;line-height:40px;color:#f5f5f5;right:66.50px;">5026545</span>
<span class="t" style="top:1006.56px;font-size:31px;line-height:40px;color:#f5f5f5;right:2229.20px;">11</span>
<span class="t" style="top:1006.56px;font-size:31px;line-height:40px;color:#f5f5f5;right:1866.50px;">1</span>
<span class="t" style="top:1006.56px;font-size:31px;line-height:40px;color:#f5f5f5;right:1506.50px;">Y</span>
<span class="t" style="top:1006.56px;font-size:31px;line-height:40px;color:#f5f5f5;right:1146.50px;">Y</span>
<span class="t" style="top:1006.56px;font-size:31px;line-height:40px;color:#f5f5f5;right:786.50px;">0</span>
<span class="t" style="top:1006.56px;font-size:31px;line-height:40px;color:#f5f5f5;right:426.50px;">0</span>
<span class="t" style="top:1006.56px;font-size:31px;line-height:40px;color:#f5f5f5;right:66.50px;">5091163</span>
<span class="t" style="top:1066.56px;font-size:31px;line-height:40px;color:#f5f5f5;right:2229.20px;">12</span>
<span class="t" style="top:1066.56px;font-size:31px;line-height:40px;color:#f5f5f5;right:1866.50px;">0</span>
<span class="t" style="top:1066.56px;font-size:31px;line-height:40px;color:#f5f5f5;right:1506.50px;">N</span>
<span class="t" style="top:1066.56px;font-size:31px;line-height:40px;color:#f5f5f5;right:1146.50px;">Y</span>
<span class="t" style="top:1066.56px;font-size:31px;line-height:40px;color:#f5f5f5;right:786.50px;">0</span>
<span class="t" style="top:1066.56px;font-size:31px;line-height:40px;color:#f5f5f5;right:426.50px;">0</span>
<span class="t" style="top:1066.56px;font-size:31px;line-height:40px;color:#f5f5f5;right:66.50px;">5105116</span>
<span class="t" style="top:1126.56px;font-size:31px;line-height:40px;color:#f5f5f5;right:2229.20px;">13</span>
<span class="t" style="top:1126.56px;font-size:31px;line-height:40px;color:#f5f5f5;right:1866.50px;">0</span>
<span class="t" style="top:1126.56px;font-size:31px;line-height:40px;color:#f5f5f5;right:1506.50px;">N</span>
<span class="t" style="top:1126.56px;font-size:31px;line-height:40px;color:#f5f5f5;right:1146.50px;">Y</span>
<span class="t" style="top:1126.56px;font-size:31px;line-height:40px;color:#f5f5f5;right:786.50px;">0</span>
<span class="t" style="top:1126.56px;font-size:31px;line-height:40px;color:#f5f5f5;right:426.50px;">0</span>
<span class="t" style="top:1126.56px;font-size:31px;line-height:40px;color:#f5f5f5;right:66.50px;">5067541</span>
<span class="t" style="top:1186.56px;font-size:31px;line-height:40px;color:#f5f5f5;right:2229.20px;">14</span>
<span class="t" style="top:1186.56px;font-size:31px;line-height:40px;color:#f5f5f5;right:1866.50px;">0</span>
<span class="t" style="top:1186.56px;font-size:31px;line-height:40px;color:#f5f5f5;right:1506.50px;">N</span>
<span class="t" style="top:1186.56px;font-size:31px;line-height:40px;color:#f5f5f5;right:1146.50px;">Y</span>
<span class="t" style="top:1186.56px;font-size:31px;line-height:40px;color:#f5f5f5;right:786.50px;">0</span>
<span class="t" style="top:1186.56px;font-size:31px;line-height:40px;color:#f5f5f5;right:426.50px;">0</span>
<span class="t" style="top:1186.56px;font-size:31px;line-height:40px;color:#f5f5f5;right:66.50px;">5113833</span>
<span class="t" style="top:1246.56px;font-size:31px;line-height:40px;color:#f5f5f5;right:2229.20px;">15</span>
<span class="t" style="top:1246.56px;font-size:31px;line-height:40px;color:#f5f5f5;right:1866.50px;">0</span>
<span class="t" style="top:1246.56px;font-size:31px;line-height:40px;color:#f5f5f5;right:1506.50px;">N</span>
<span class="t" style="top:1246.56px;font-size:31px;line-height:40px;color:#f5f5f5;right:1146.50px;">N</span>
<span class="t" style="top:1246.56px;font-size:31px;line-height:40px;color:#f5f5f5;right:786.50px;">0</span>
<span class="t" style="top:1246.56px;font-size:31px;line-height:40px;color:#f5f5f5;right:426.50px;">0</span>
<span class="t" style="top:1246.56px;font-size:31px;line-height:40px;color:#f5f5f5;right:66.50px;">5024062</span>
<span class="t" style="top:1306.56px;font-size:31px;line-height:40px;color:#f5f5f5;right:2229.20px;">16</span>
<span class="t" style="top:1306.56px;font-size:31px;line-height:40px;color:#f5f5f5;right:1866.50px;">0</span>
<span class="t" style="top:1306.56px;font-size:31px;line-height:40px;color:#f5f5f5;right:1506.50px;">Y</span>
<span class="t" style="top:1306.56px;font-size:31px;line-height:40px;color:#f5f5f5;right:1146.50px;">N</span>
<span class="t" style="top:1306.56px;font-size:31px;line-height:40px;color:#f5f5f5;right:786.50px;">0</span>
<span class="t" style="top:1306.56px;font-size:31px;line-height:40px;color:#f5f5f5;right:426.50px;">0</span>
<span class="t" style="top:1306.56px;font-size:31px;line-height:40px;color:#f5f5f5;right:66.50px;">5143075</span>
<span class="t" style="top:1366.56px;font-size:31px;line-height:40px;color:#f5f5f5;right:2229.20px;">17</span>
<span class="t" style="top:1366.56px;font-size:31px;line-height:40px;color:#f5f5f5;right:1866.50px;">1</span>
<span class="t" style="top:1366.56px;font-size:31px;line-height:40px;color:#f5f5f5;right:1506.50px;">N</span>
<span class="t" style="top:1366.56px;font-size:31px;line-height:40px;color:#f5f5f5;right:1146.50px;">Y</span>
<span class="t" style="top:1366.56px;font-size:31px;line-height:40px;color:#f5f5f5;right:786.50px;">0</span>
<span class="t" style="top:1366.56px;font-size:31px;line-height:40px;color:#f5f5f5;right:426.50px;">0</span>
<span class="t" style="top:1366.56px;font-size:31px;line-height:40px;color:#f5f5f5;right:66.50px;">5067518</span>
<span class="t" style="top:1426.56px;font-size:31px;line-height:40px;color:#f5f5f5;right:2229.20px;">18</span>
<span class="t" style="top:1426.56px;font-size:31px;line-height:40px;color:#f5f5f5;right:1866.50px;">0</span>
<span class="t" style="top:1426.56px;font-size:31px;line-height:40px;color:#f5f5f5;right:1506.50px;">Y</span>
<span class="t" style="top:1426.56px;font-size:31px;line-height:40px;color:#f5f5f5;right:1146.50px;">N</span>
<span class="t" style="top:1426.56px;font-size:31px;line-height:40px;color:#f5f5f5;right:786.50px;">0</span>
<span class="t" style="top:1426.56px;font-size:31px;line-height:40px;color:#f5f5f5;right:426.50px;">1</span>
<span class="t" style="top:1426.56px;font-size:31px;line-height:40px;color:#f5f5f5;right:66.50px;">5041787</span>
<span class="t" style="top:1486.56px;font-size:31px;line-height:40px;color:#f5f5f5;right:2229.20px;">19</span>
<span class="t" style="top:1486.56px;font-size:31px;line-height:40px;color:#f5f5f5;right:1866.50px;">0</span>
<span class="t" style="top:1486.56px;font-size:31px;line-height:40px;color:#f5f5f5;right:1506.50px;">N</span>
<span class="t" style="top:1486.56px;font-size:31px;line-height:40px;color:#f5f5f5;right:1146.50px;">N</span>
<span class="t" style="top:1486.56px;font-size:31px;line-height:40px;color:#f5f5f5;right:786.50px;">0</span>
<span class="t" style="top:1486.56px;font-size:31px;line-height:40px;color:#f5f5f5;right:426.50px;">0</span>
<span class="t" style="top:1486.56px;font-size:31px;line-height:40px;color:#f5f5f5;right:66.50px;">5105680</span>
<span class="t" style="top:1546.56px;font-size:31px;line-height:40px;color:#f5f5f5;right:2229.20px;">20</span>
<span class="t" style="top:1546.56px;font-size:31px;line-height:40px;color:#f5f5f5;right:1866.50px;">0</span>
<span class="t" style="top:1546.56px;font-size:31px;line-height:40px;color:#f5f5f5;right:1506.50px;">Y</span>
<span class="t" style="top:1546.56px;font-size:31px;line-height:40px;color:#f5f5f5;right:1146.50px;">Y</span>
<span class="t" style="top:1546.56px;font-size:31px;line-height:40px;color:#f5f5f5;right:786.50px;">0</span>
<span class="t" style="top:1546.56px;font-size:31px;line-height:40px;color:#f5f5f5;right:426.50px;">0</span>
<span class="t" style="top:1546.56px;font-size:31px;line-height:40px;color:#f5f5f5;right:66.50px;">5036402</span>
<span class="t" style="top:1606.56px;font-size:31px;line-height:40px;color:#f5f5f5;right:2229.20px;">21</span>
<span class="t" style="top:1606.56px;font-size:31px;line-height:40px;color:#f5f5f5;right:1866.50px;">0</span>
<span class="t" style="top:1606.56px;font-size:31px;line-height:40px;color:#f5f5f5;right:1506.50px;">Y</span>
<span class="t" style="top:1606.56px;font-size:31px;line-height:40px;color:#f5f5f5;right:1146.50px;">Y</span>
<span class="t" style="top:1606.56px;font-size:31px;line-height:40px;color:#f5f5f5;right:786.50px;">0</span>
<span class="t" style="top:1606.56px;font-size:31px;line-height:40px;color:#f5f5f5;right:426.50px;">0</span>
<span class="t" style="top:1606.56px;font-size:31px;line-height:40px;color:#f5f5f5;right:66.50px;">5044489</span>
</section>
</body>
</html>
